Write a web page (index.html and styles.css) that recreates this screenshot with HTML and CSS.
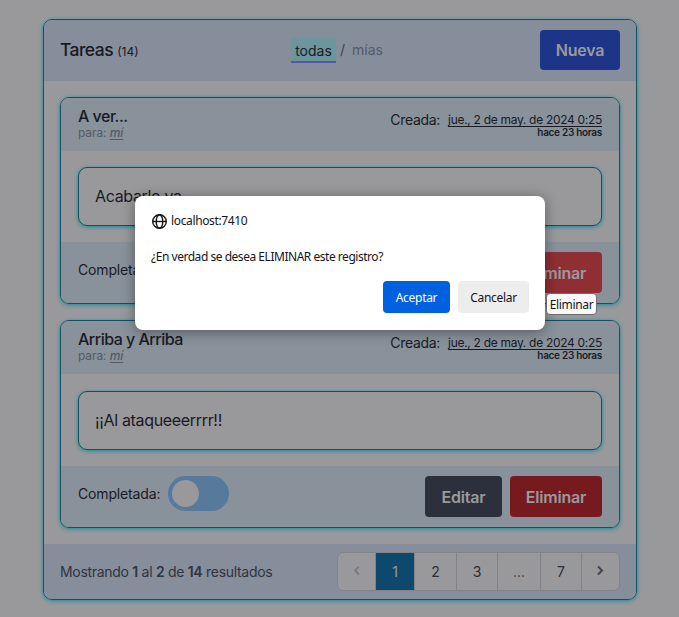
FILE: index.html
```html
<!DOCTYPE html>
<html lang="es">
<head>
<meta charset="utf-8">
<title>Tareas</title>
<link rel="stylesheet" href="styles.css">
</head>
<body>
<main class="panel">
  <header class="panel-head">
    <h1 class="title"><span class="title-text">Tareas</span> <small>(14)</small></h1>
    <nav class="filter"><a class="current">todas</a><span class="slash">/</span><a class="other">mías</a></nav>
    <button class="btn new">Nueva</button>
  </header>
  <section class="list">
    <article class="task">
      <header class="task-head">
        <div><h2 class="name">A ver...</h2><p class="for">para: <em>mí</em></p></div>
        <div class="made"><p class="date"><span class="label">Creada:</span><u>jue., 2 de may. de 2024 0:25</u></p><p class="ago">hace 23 horas</p></div>
      </header>
      <div class="task-body"><p class="message">Acabarlo ya</p></div>
      <footer class="task-foot">
        <span class="done">Completada:</span><span class="toggle"></span>
        <button class="btn edit">Editar</button><button class="btn delete hover">Eliminar</button>
      </footer>
    </article>
    <article class="task">
      <header class="task-head">
        <div><h2 class="name">Arriba y Arriba</h2><p class="for">para: <em>mí</em></p></div>
        <div class="made"><p class="date"><span class="label">Creada:</span><u>jue., 2 de may. de 2024 0:25</u></p><p class="ago">hace 23 horas</p></div>
      </header>
      <div class="task-body"><p class="message">¡¡Al ataqueeerrrr!!</p></div>
      <footer class="task-foot">
        <span class="done">Completada:</span><span class="toggle"></span>
        <button class="btn edit">Editar</button><button class="btn delete">Eliminar</button>
      </footer>
    </article>
  </section>
  <footer class="panel-foot">
    <p class="summary">Mostrando <b>1</b> al <b>2</b> de <b>14</b> resultados</p>
    <nav class="pages">
      <span class="prev"><svg width="20" height="20" viewBox="0 0 20 20"><path d="M12 5.5 8 9.5l4 4"/></svg></span>
      <span class="active">1</span><span>2</span><span>3</span><span class="dots">...</span><span>7</span>
      <span class="next"><svg width="20" height="20" viewBox="0 0 20 20"><path d="m7 5.5 4 4-4 4"/></svg></span>
    </nav>
  </footer>
</main>
<div class="dialog" role="alertdialog">
  <div class="origin">
    <svg width="16" height="16" viewBox="0 0 16 16"><circle cx="8.5" cy="8.5" r="6.8"/><ellipse cx="8.5" cy="8.5" rx="3.3" ry="6.8"/><path d="M1.7 8.5h13.6"/></svg>
    <span>localhost:7410</span>
  </div>
  <p class="question">¿En verdad se desea ELIMINAR este registro?</p>
  <div class="actions"><button class="accept">Aceptar</button><button class="cancel">Cancelar</button></div>
</div>
<div class="tooltip">Eliminar</div>
</body>
</html>
```
FILE: styles.css
```css
* { box-sizing: border-box; }
body { margin: 0; height: 617px; overflow: hidden; padding: 19px 42px 0 43px; background: #99999b; color: #181a24; font-family: Inter, sans-serif; position: relative; }
h1, h2, p { margin: 0; font-weight: 400; }
button { border: 0; padding: 0; font-family: inherit; }
.panel, .task, .message { border: 1px solid #11505f; border-radius: 9px; box-shadow: 0 1px 4px #168ca0; }
.panel { height: 581px; display: flex; flex-direction: column; }
.panel-head { height: 61px; flex: none; padding: 0 16px 2px; background: #868d9b; border-radius: 8px 8px 0 0; display: grid; grid-template-columns: 231px 1fr 80px; align-items: center; }
.title { font-size: 17.5px; font-weight: 500; letter-spacing: -.55px; white-space: nowrap; }
.title small { font-size: 12px; font-weight: 400; letter-spacing: 0; }
.filter { display: flex; align-items: center; font-size: 14px; }
.current { width: 45px; height: 26px; line-height: 27px; text-align: center; background: #6b969d; border-bottom: 2px solid #5657a0; }
.slash { width: 16px; padding-left: 4px; color: #344454; }
.other { color: #555b68; }
.btn { height: 41px; border-radius: 4px; color: #9a9a9d; font-size: 16px; font-weight: 600; letter-spacing: -.2px; }
.new { height: 40px; background: #1d3487; }
.list { height: 463px; padding: 16px; display: grid; grid-template-rows: 207px 208px; gap: 16px; }
.task { display: flex; flex-direction: column; }
.task-head { height: 53px; background: #89929b; padding: 0 17px; border-radius: 8px 8px 0 0; display: flex; justify-content: space-between; }
.name { font-size: 16px; line-height: 20px; font-weight: 500; margin-top: 8px; letter-spacing: -.5px; }
.for { font-size: 12px; line-height: 14px; color: #535b65; letter-spacing: -.1px; }
.for em { text-decoration: underline; text-underline-offset: 2px; font-weight: 500; }
.made { text-align: right; padding-top: 13px; }
.date { display: flex; align-items: center; height: 17px; font-size: 12px; line-height: 17px; letter-spacing: -.3px; }
.label { font-size: 14px; margin-right: 8px; margin-top: -1px; }
.date u { text-underline-offset: 2px; }
.ago { font-size: 10px; line-height: 10px; font-weight: 600; letter-spacing: -.3px; margin-top: -1px; }
.task-body { flex: 1; padding: 16px 17px; }
.task + .task .task-body { padding-top: 17px; }
.message { height: 59px; padding: 0 16px; line-height: 57px; font-size: 16px; letter-spacing: -.33px; }
.task-foot { height: 61px; background: #89929b; border-radius: 0 0 8px 8px; padding: 10px 17px; display: flex; align-items: flex-start; }
.done { width: 90px; font-size: 14px; line-height: 35px; letter-spacing: -.15px; }
.toggle { width: 61px; height: 35px; padding: 4px; border-radius: 18px; background: #577a9c; }
.toggle::before { content: ""; display: block; width: 27px; height: 27px; border-radius: 50%; background: #99999b; }
.edit { width: 77px; background: #2c303c; margin-left: auto; margin-right: 8px; }
.delete { width: 92px; background: #761a1f; }
.hover { background: #8f2f34; }
.panel-foot { flex: 1; background: #868d9b; border-radius: 0 0 8px 8px; padding: 0 16px; display: flex; justify-content: space-between; align-items: center; }
.summary { font-size: 14px; color: #30343f; white-space: nowrap; letter-spacing: -.3px; }
.summary b { font-weight: 600; }
.pages { height: 39px; border: 1px solid #828389; border-radius: 6px; overflow: hidden; background: #99999b; display: grid; grid-template-columns: 38px 39px 42px 41px 43px 41px 37px; font-size: 14px; margin-top: -1px; color: #292e39; }
.pages span { display: flex; align-items: center; justify-content: center; border-right: 1px solid #828389; }
.pages .next { border: 0; }
.pages .active { background: #0e496d; color: #99999b; }
.pages .dots { color: #42464f; }
.pages svg { fill: none; stroke: #41454f; stroke-width: 2; }
.pages .prev svg { stroke: #777b82; stroke-width: 1.8; }
.dialog { position: absolute; left: 135px; top: 196px; width: 410px; height: 134px; padding: 17px 16px; border-radius: 8px; background: #fff; box-shadow: 0 2px 14px #0006; color: #15141a; font-family: "Noto Sans", sans-serif; font-size: 12px; letter-spacing: -.36px; }
.origin { display: flex; align-items: center; gap: 4px; height: 16px; line-height: 16px; }
.origin svg { overflow: visible; fill: none; stroke: #15141a; stroke-width: 1.4; }
.question { margin-top: 19px; height: 17px; line-height: 18px; white-space: nowrap; letter-spacing: -.47px; }
.actions { margin-top: 16px; display: flex; justify-content: flex-end; gap: 8px; }
.actions button { height: 32px; padding-top: 1px; border-radius: 4px; font-size: 12px; letter-spacing: -.3px; }
.accept { width: 67px; background: #0061e0; color: #fff; }
.cancel { width: 71px; background: #ededee; color: #15141a; }
.tooltip { position: absolute; left: 546px; top: 293px; width: 51px; height: 22px; text-align: center; background: #f9f9fb; border: 1px solid #6b6b70; border-radius: 4px; font: 12px/22px "Noto Sans", sans-serif; letter-spacing: -.35px; color: #15141a; }
```
